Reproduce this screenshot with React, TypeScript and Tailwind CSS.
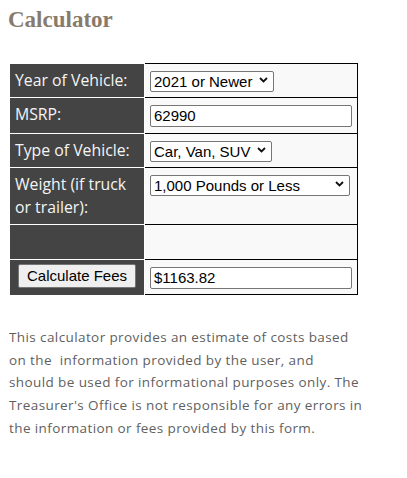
import React from "react";

const Chevron = () => (
  <svg width="9" height="6" viewBox="0 0 9 6" className="absolute right-[6px] top-[8px] pointer-events-none">
    <path d="M1 1 L4.5 4.5 L8 1" fill="none" stroke="#111" strokeWidth="1.8" />
  </svg>
);

function FakeSelect({ value, width }: { value: string; width: string }) {
  return (
    <div className={`relative ${width}`}>
      <select
        className="appearance-none w-full h-[21px] border border-[#767676] rounded-[2px] bg-white pl-[3px] text-[15px] leading-[19px] text-black"
        style={{ fontFamily: '"Liberation Sans", Arial, sans-serif' }}
        defaultValue={value}
      >
        <option>{value}</option>
      </select>
      <Chevron />
    </div>
  );
}

function Row({
  label,
  children,
  h,
  last,
  labelTop,
}: {
  label?: React.ReactNode;
  children?: React.ReactNode;
  h: string;
  last?: boolean;
  labelTop?: string;
}) {
  return (
    <div className={`flex ${h}`}>
      <div
        className={`w-[135px] bg-[#444] border-t border-r border-white text-[#f4f4f4] text-[15.8px] leading-[23px] pl-[5px] ${labelTop ?? "pt-[5px]"}`}
        style={{ fontFamily: '"Open Sans", sans-serif' }}
      >
        {label}
      </div>
      <div
        className={`w-[213px] bg-[#f9f9f9] border-t border-r border-black pl-[5px] pt-[5px] ${last ? "border-b" : ""}`}
      >
        {children}
      </div>
    </div>
  );
}

export default function App() {
  return (
    <div className="bg-white w-[407px] h-[478px] overflow-hidden">
      <h2
        className="pl-[8px] pt-[6px] text-[23px] leading-[28px] font-bold text-[#887b6b]"
        style={{ fontFamily: '"Liberation Serif", "Times New Roman", serif' }}
      >
        Calculator
      </h2>
      <div className="mt-[29px] ml-[10px] w-[348px]">
        <Row h="h-[34px]" label="Year of Vehicle:">
          <FakeSelect value="2021 or Newer" width="w-[124px]" />
        </Row>
        <Row h="h-[36px]" label="MSRP:">
          <input
            className="w-[202px] h-[22px] border border-[#767676] rounded-[2px] bg-white px-[3px] text-[15px] text-black"
            style={{ fontFamily: '"Liberation Sans", Arial, sans-serif' }}
            defaultValue="62990"
          />
        </Row>
        <Row h="h-[34px]" label="Type of Vehicle:">
          <FakeSelect value="Car, Van, SUV" width="w-[122px]" />
        </Row>
        <Row
          h="h-[57px]"
          label={
            <>
              Weight (if truck
              <br />
              or trailer):
            </>
          }
        >
          <FakeSelect value="1,000 Pounds or Less" width="w-[200px]" />
        </Row>
        <Row h="h-[35px]" />
        <Row
          h="h-[36px]"
          last
          label={
            <div className="flex justify-center -ml-[5px] pt-0">
              <button
                className="h-[24px] w-[118px] bg-[#efefef] border border-[#767676] rounded-[2px] text-[15px] text-black leading-[20px]"
                style={{ fontFamily: '"Liberation Sans", Arial, sans-serif' }}
              >
                Calculate Fees
              </button>
            </div>
          }
          labelTop="pt-[4px]"
        >
          <input
            className="w-[202px] h-[22px] border border-[#767676] rounded-[2px] bg-white px-[3px] text-[15px] text-black"
            style={{ fontFamily: '"Liberation Sans", Arial, sans-serif' }}
            defaultValue="$1163.82"
          />
        </Row>
      </div>
      <p
        className="mt-[31px] pl-[9px] text-[13.5px] tracking-[0.4px] leading-[22.7px] text-[#5f5f5f] whitespace-nowrap"
        style={{ fontFamily: '"Open Sans", sans-serif' }}
      >
        This calculator provides an estimate of costs based
        <br />
        on the&nbsp; information provided by the user, and
        <br />
        should be used for informational purposes only. The
        <br />
        Treasurer's Office is not responsible for any errors in
        <br />
        the information or fees provided by this form.
      </p>
    </div>
  );
}
